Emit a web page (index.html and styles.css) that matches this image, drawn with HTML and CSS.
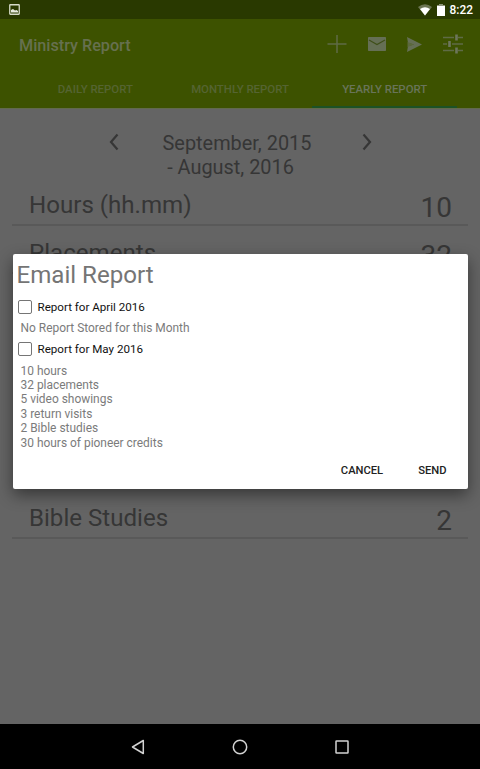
FILE: index.html
```html
<!DOCTYPE html>
<html>
<head>
	<meta charset="utf-8">
	<title>Ministry Report</title>
	<link rel="stylesheet" href="styles.css">
</head>
<body>
	<div class="statusBar">
		<svg class="picIcon" width="11" height="11" viewBox="0 0 11 11"><rect x=".75" y=".75" width="9.5" height="9.5" rx=".5" fill="none" stroke="#d6dbc8" stroke-width="1.3"/><path d="M2 8.5V6L4 5l2 1.500L7.500 6 9 7V8.500z" fill="#e8ebe0"/></svg>
		<div class="statusRight">
			<svg width="14" height="12" viewBox="0 0 14 12"><path d="M0 3Q7-2.500 14 3L7 11.500z" fill="#6c7553"/><path d="M2 5Q7 1.500 12 5L7 11.500z" fill="#fff"/></svg>
			<svg class="battery" width="8" height="12" viewBox="0 0 8 12"><path d="M2 0h4v1H8v2H0V1h2z" fill="#8c9377"/><path d="M0 2h8v10H0z" fill="#fff"/></svg>
			<span>8:22</span>
		</div>
	</div>

	<div class="header">
		<div class="titleBar">
			<h1>Ministry Report</h1>
			<div class="actions">
				<svg width="20" height="20" viewBox="0 0 20 20"><path d="M10 1v18M.5 10h19" stroke="#5f6b46" stroke-width="1.500" fill="none"/></svg>
				<svg width="18" height="14" viewBox="0 0 18 14"><rect width="18" height="14" rx=".7" fill="#656f55"/><path d="M1 3l8 4.500L17 3" stroke="#3f4f19" stroke-width="1.100" fill="none"/></svg>
				<svg width="15" height="15" viewBox="0 0 15 15"><path d="M0 0l15 7.500L0 15l1-6L7 7.500 1 6z" fill="#656f55"/><path d="M.5 5l6.500 2.500-6.500 2.500z" fill="#5c693d"/></svg>
				<svg width="20" height="20" viewBox="0 0 20 20"><path d="M0 3.500h11M15 3.500h5M0 10h4M9 10h11M0 16.500h11M15 16.500h5" stroke="#5f6b46" stroke-width="1.300"/><path d="M13.500 .5v6M6.500 7v6M13.500 13.500v6" stroke="#6d765c" stroke-width="2.600"/></svg>
			</div>
		</div>
		<div class="tabs">
			<div class="tab">DAILY REPORT</div>
			<div class="tab">MONTHLY REPORT</div>
			<div class="tab active">YEARLY REPORT</div>
		</div>
	</div>

	<div class="content">
		<div class="period">
			<svg width="10" height="18" viewBox="0 0 10 18"><path d="M8.500 1.500L2 9l6.500 7.500" fill="none" stroke="#363636" stroke-width="2.200"/></svg>
			<div class="range">
				<div>September, 2015</div>
				<div class="to">- August, 2016</div>
			</div>
			<svg width="10" height="18" viewBox="0 0 10 18"><path d="M1.500 1.500L8 9l-6.500 7.500" fill="none" stroke="#363636" stroke-width="2.200"/></svg>
		</div>
		<div class="row"><span>Hours (hh.mm)</span><b>10</b></div>
		<div class="row placements"><span>Placements</span><b>32</b></div>
		<div class="row studies"><span>Bible Studies</span><b>2</b></div>
	</div>

	<div class="navBar">
		<svg width="14" height="16" viewBox="0 0 14 16"><path d="M12.300 1.500v13L1.500 8z" fill="none" stroke="#d2d2d2" stroke-width="1.500" stroke-linejoin="round"/></svg>
		<svg width="16" height="16" viewBox="0 0 16 16"><circle cx="8" cy="8" r="6.700" fill="none" stroke="#d2d2d2" stroke-width="1.500"/></svg>
		<svg width="14" height="14" viewBox="0 0 14 14"><rect x="1" y="1" width="12" height="12" rx=".5" fill="none" stroke="#d2d2d2" stroke-width="1.500"/></svg>
	</div>

	<div class="dialog">
		<h2>Email Report</h2>
		<label class="check"><i></i><span>Report for April 2016</span></label>
		<p class="none">No Report Stored for this Month</p>
		<label class="check"><i></i><span>Report for May 2016</span></label>
		<p class="list">10 hours<br>32 placements<br>5 video showings<br>3 return visits<br>2 Bible studies<br>30 hours of pioneer credits</p>
		<div class="buttons">
			<button class="cancel">CANCEL</button>
			<button>SEND</button>
		</div>
	</div>
</body>
</html>
```

FILE: styles.css
```css
*{
	box-sizing: border-box;
}
body{
	margin: 0;
	width: 480px;
	height: 769px;
	overflow: hidden;
	position: relative;
	display: flex;
	flex-direction: column;
	background: #646464;
	color: #363636;
	font-family: Roboto, sans-serif;
}
svg{
	display: block;
	flex: none;
}
.statusBar{
	height: 19px;
	display: flex;
	align-items: center;
	justify-content: space-between;
	padding: 0 7px 0 9px;
	background: #293900;
}
.statusRight{
	display: flex;
	align-items: center;
	color: #fff;
	font-size: 11.9px;
	font-weight: 500;
}
.battery{
	margin: 0 5px 0 5px;
}

/* action bar + tabs */
.header{
	height: 90px;
	background: #3d5200;
	border-bottom: 1px solid #626a4c;
}
.titleBar{
	height: 52px;
	display: flex;
	align-items: center;
	justify-content: space-between;
	padding: 0 17px 0 19px;
}
h1{
	margin: 0;
	font-size: 16.2px;
	font-weight: 500;
	color: #66704f;
}
.actions{
	display: flex;
	align-items: center;
	gap: 21px;
	padding-bottom: 2px;
}
.tabs{
	display: flex;
	height: 37px;
	padding: 0 23px;
}
.tab{
	flex: 1;
	text-align: center;
	line-height: 37px;
	font-size: 11.4px;
	font-weight: 500;
	color: #556432;
}
.tab.active{
	color: #69745a;
	border-bottom: 2px solid #1c5226;
}

.content{
	flex: 1;
	padding: 23px 12px 0;
}
.period{
	display: flex;
	justify-content: center;
	gap: 50px;
	height: 49px;
}
.period svg{
	margin-top: 1px;
}
.range{
	width: 144px;
	margin-left: -1px;
	text-align: center;
	white-space: nowrap;
	font-size: 19.9px;
	line-height: 24px;
}
.range div{
	margin: 0 -2px 0 -7px;
}
.range .to{
	padding-right: 13px;
}
.row{
	display: flex;
	justify-content: space-between;
	height: 45px;
	padding: 0 16px 0 17px;
	line-height: 48px;
	font-size: 24.1px;
	border-bottom: 2px solid #595959;
}
.row b{
	font-size: 28px;
	font-weight: 400;
	line-height: 53px;
}
.placements{
	margin-top: 3px;
}
.studies{
	margin-top: 220px;
}

.navBar{
	height: 45px;
	display: flex;
	align-items: center;
	justify-content: center;
	gap: 87px;
	background: #000;
}

.dialog{
	position: absolute;
	left: 12.5px;
	top: 253.5px;
	width: 455px;
	height: 235.5px;
	padding: 6px 5px 0 4px;
	background: #fff;
	border-radius: 2px;
	box-shadow: 0 6px 16px rgba(0,0,0,.45);
}
h2{
	margin: 0 0 9px;
	font-size: 24.1px;
	line-height: 30px;
	font-weight: 400;
	color: #757575;
}
.check{
	display: flex;
	align-items: center;
	height: 16px;
	padding-left: 1px;
	gap: 6px;
	font-size: 11.6px;
	color: #111;
}
.check i{
	width: 14px;
	height: 14px;
	border: 1.5px solid #757575;
	border-radius: 2px;
}
.dialog p{
	margin: 0;
	padding-left: 4px;
	font-size: 11.95px;
	color: #7b7b7b;
}
.dialog .none{
	line-height: 26px;
}
.dialog .list{
	margin-top: 7px;
	line-height: 14.4px;
}
.buttons{
	display: flex;
	justify-content: flex-end;
	gap: 35px;
	margin-top: 14px;
	padding-right: 16px;
}
button{
	padding: 0;
	border: none;
	background: none;
	font: 500 11.200px Roboto, sans-serif;
	color: #222;
}
```
